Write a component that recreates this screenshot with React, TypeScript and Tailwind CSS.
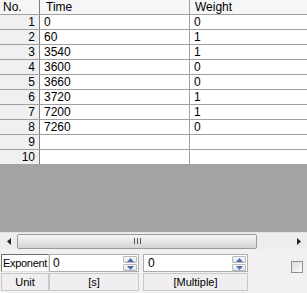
import React from "react";

const rows: [string, string][] = [
  ["0", "0"],
  ["60", "1"],
  ["3540", "1"],
  ["3600", "0"],
  ["3660", "0"],
  ["3720", "1"],
  ["7200", "1"],
  ["7260", "0"],
  ["", ""],
  ["", ""],
];

function Spinner() {
  return (
    <div className="flex flex-col gap-px w-[15px] h-[17px] py-px pr-px">
      <div className="flex-1 flex items-center justify-center border border-[#b8b8b8] bg-gradient-to-b from-[#fbfbfb] to-[#e4e4e4] rounded-[1px]">
        <svg width="7" height="4" viewBox="0 0 7 4">
          <path d="M0 4 L3.5 0 L7 4 Z" fill="#4d6db4" />
        </svg>
      </div>
      <div className="flex-1 flex items-center justify-center border border-[#b8b8b8] bg-gradient-to-b from-[#fbfbfb] to-[#e4e4e4] rounded-[1px]">
        <svg width="7" height="4" viewBox="0 0 7 4">
          <path d="M0 0 L3.5 4 L7 0 Z" fill="#4d6db4" />
        </svg>
      </div>
    </div>
  );
}

export default function App() {
  return (
    <div
      className="w-[307px] h-[293px] flex flex-col bg-[#f2f0f2] overflow-hidden text-[12px] text-black"
      style={{ fontFamily: '"Liberation Sans", Arial, sans-serif' }}
    >
      {/* Grid */}
      <div className="flex flex-col bg-white">
        <div className="flex h-[15px] border-b border-[#a0a0a0] bg-[#f6f6f6] leading-[14px]">
          <div className="w-[40px] pl-[3px] border-r border-[#808080]">No.</div>
          <div className="w-[150px] pl-[6px] border-r border-[#a0a0a0]">Time</div>
          <div className="flex-1 pl-[5px]">Weight</div>
        </div>
        {rows.map((r, i) => (
          <div key={i} className="flex h-[15px] border-b border-[#a0a0a0] leading-[14px]">
            <div className="w-[40px] pr-[4px] text-right bg-[#f0f0f2] border-r border-[#808080]">
              {i + 1}
            </div>
            <div className="w-[150px] pl-[4px] border-r border-[#a0a0a0]">{r[0]}</div>
            <div className="flex-1 pl-[4px]">{r[1]}</div>
          </div>
        ))}
      </div>

      {/* Empty area */}
      <div className="h-[67px] bg-[#a4a2a4]" />

      {/* Horizontal scrollbar */}
      <div className="h-[17px] flex items-center bg-[#eeecee] border-t border-[#e4e2e4]">
        <div className="w-[17px] flex items-center justify-center">
          <svg width="4" height="7" viewBox="0 0 4 7">
            <path d="M4 0 L0 3.5 L4 7 Z" fill="#222" />
          </svg>
        </div>
        <div className="w-[240px] h-[15px] rounded-[2px] border border-[#9a9a9a] bg-gradient-to-b from-[#f4f4f4] via-[#e6e6e6] to-[#d4d4d4] flex items-center justify-center">
          <svg width="7" height="6" viewBox="0 0 7 6">
            <path d="M0.5 0 V6 M3.5 0 V6 M6.5 0 V6" stroke="#555" strokeWidth="1" />
          </svg>
        </div>
        <div className="flex-1" />
        <div className="w-[17px] flex items-center justify-center">
          <svg width="4" height="7" viewBox="0 0 4 7">
            <path d="M0 0 L4 3.5 L0 7 Z" fill="#222" />
          </svg>
        </div>
      </div>

      {/* Bottom panel */}
      <div className="flex-1 pl-px pt-[5px] flex text-[11px]">
        <div className="flex flex-col">
          <div className="flex h-[18px]">
            <div className="w-[48px] h-[18px] border border-t-[#707070] border-l-[#707070] border-r-[#e0e0e0] border-b-[#e0e0e0] bg-white leading-[16px] pl-px tracking-[-0.3px] whitespace-nowrap overflow-hidden">
              Exponent
            </div>
            <div className="w-[90px] h-[18px] flex border border-[#abadb3] bg-white text-[12px]">
              <div className="flex-1 pl-[3px] leading-[16px]">0</div>
              <Spinner />
            </div>
            <div className="w-[4px]" />
            <div className="w-[105px] h-[18px] flex border border-[#abadb3] bg-white text-[12px]">
              <div className="flex-1 pl-[4px] leading-[16px]">0</div>
              <Spinner />
            </div>
          </div>
          <div className="flex h-[18px] mt-px">
            <div className="w-[48px] border border-[#c8c8c8] bg-[#f0eef0] text-center leading-[16px]">Unit</div>
            <div className="w-[90px] border border-[#c8c8c8] bg-[#f0eef0] text-center leading-[16px]">[s]</div>
            <div className="w-[4px]" />
            <div className="w-[105px] border border-[#c8c8c8] bg-[#f0eef0] text-center leading-[16px]">[Multiple]</div>
          </div>
        </div>
        <div className="flex-1 flex justify-end pr-[4px] pt-[7px]">
          <div className="w-[12px] h-[12px] border border-[#8e8f8f] bg-gradient-to-br from-[#dcdcdc] to-[#fbfbfb]" />
        </div>
      </div>
    </div>
  );
}
